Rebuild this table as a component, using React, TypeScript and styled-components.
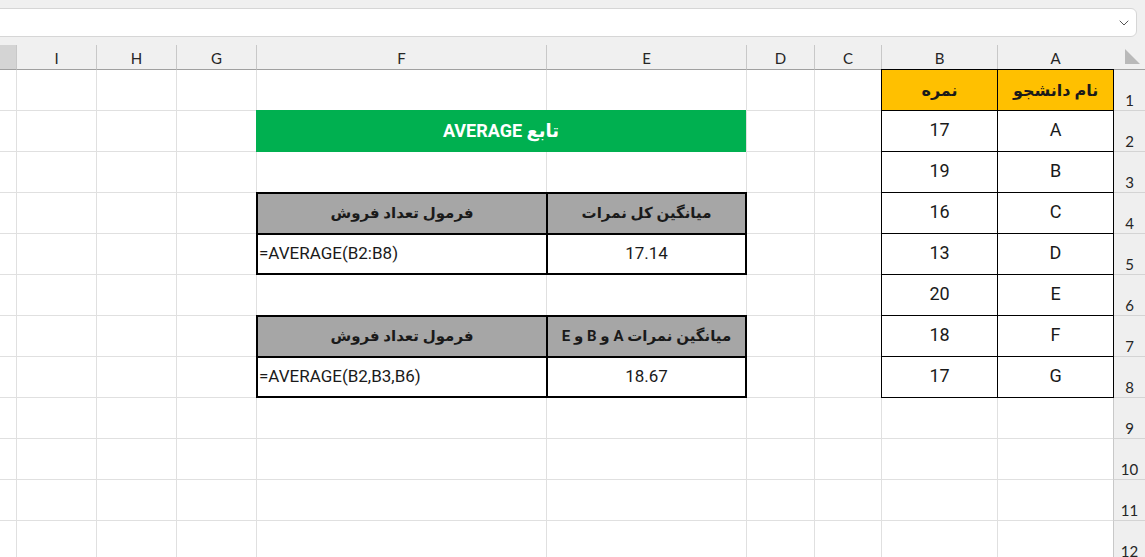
import styled, { createGlobalStyle } from "styled-components";
import { ChevronDown } from "lucide-react";

const GlobalStyle = createGlobalStyle`
  html, body {
    margin: 0;
    padding: 0;
    background: #ffffff;
    overflow: hidden;
  }
  * {
    box-sizing: border-box;
  }
`;

const COLUMNS = ["A", "B", "C", "D", "E", "F", "G", "H", "I"];
const ROW_COUNT = 12;

const students = [
  { name: "A", score: 17 },
  { name: "B", score: 19 },
  { name: "C", score: 16 },
  { name: "D", score: 13 },
  { name: "E", score: 20 },
  { name: "F", score: 18 },
  { name: "G", score: 17 },
];

const summaries = [
  { title: "میانگین کل نمرات", value: "17.14", formula: "=AVERAGE(B2:B8)", row: 5 },
  { title: "میانگین نمرات A و B و E", value: "18.67", formula: "=AVERAGE(B2,B3,B6)", row: 8 },
];

export default function App() {
  const emptyCells = [];
  for (let r = 2; r <= ROW_COUNT + 1; r++) {
    for (let c = 2; c <= 11; c++) {
      emptyCells.push(<Cell key={`${r}-${c}`} $row={r} $col={c} $edge={c === 11} />);
    }
  }

  return (
    <>
      <GlobalStyle />
      <Window>
        <FormulaBar>
          <FormulaInput>
            <ChevronDown size={16} strokeWidth={1.5} color="#555" />
          </FormulaInput>
        </FormulaBar>
        <Sheet>
          <Corner>
            <svg width="16" height="16" viewBox="0 0 16 16">
              <polygon points="0,0 0,15 15,15" fill="#b9b9b9" />
            </svg>
          </Corner>
          {COLUMNS.map((letter, i) => (
            <ColHeader key={letter} $col={i + 2}>
              {letter}
            </ColHeader>
          ))}
          <ColStub />
          {Array.from({ length: ROW_COUNT }, (_, i) => (
            <RowHeader key={i} $row={i + 2}>
              {i + 1}
            </RowHeader>
          ))}
          {emptyCells}

          <StudentTable>
            <StudentCell $head>نام دانشجو</StudentCell>
            <StudentCell $head>نمره</StudentCell>
            {students.flatMap((s) => [
              <StudentCell key={`n${s.name}`}>{s.name}</StudentCell>,
              <StudentCell key={`s${s.name}`}>{s.score}</StudentCell>,
            ])}
          </StudentTable>

          <Banner>تابع AVERAGE</Banner>

          {summaries.map((t) => (
            <SummaryTable key={t.row} $row={t.row}>
              <SummaryCell $head>{t.title}</SummaryCell>
              <SummaryCell $head>فرمول تعداد فروش</SummaryCell>
              <SummaryCell>{t.value}</SummaryCell>
              <FormulaText>{t.formula}</FormulaText>
            </SummaryTable>
          ))}
        </Sheet>
      </Window>
    </>
  );
}

const Window = styled.div`
  width: 1145px;
  height: 557px;
  overflow: hidden;
  background: #f0f0f0;
`;

const FormulaBar = styled.div`
  height: 45px;
  padding: 8px 8px 8px 0;
  background: #f0f0f0;
`;

const FormulaInput = styled.div`
  height: 29px;
  margin-left: -10px;
  background: #ffffff;
  border: 1px solid #d6d6d6;
  border-radius: 6px;
  display: flex;
  align-items: center;
  justify-content: flex-end;
  padding-right: 4px;
`;

const Sheet = styled.div`
  direction: rtl;
  display: grid;
  grid-template-columns: 32px 116px 116px 67px 68px 200px 290px 80px 80px 80px 16px;
  grid-template-rows: 25px repeat(${ROW_COUNT}, 41px);
  background: #ffffff;
  font-family: Lato, "Liberation Sans", sans-serif;
`;

const Corner = styled.div`
  grid-column: 1;
  grid-row: 1;
  background: #f0f0f0;
  border-bottom: 1px solid #a0a0a0;
  display: flex;
  align-items: flex-end;
  justify-content: flex-start;
  padding: 0 4px 4px 0;
`;

const ColHeader = styled.div<{ $col: number }>`
  grid-column: ${({ $col }) => $col};
  grid-row: 1;
  background: #f0f0f0;
  border-left: 1px solid #c8c8c8;
  border-bottom: 1px solid #a0a0a0;
  display: flex;
  align-items: center;
  justify-content: center;
  font-size: 15px;
  color: #262626;
  padding-top: 2px;
`;

const ColStub = styled.div`
  grid-column: 11;
  grid-row: 1;
  background: #d4d4d4;
  border-bottom: 1px solid #a0a0a0;
`;

const RowHeader = styled.div<{ $row: number }>`
  grid-column: 1;
  grid-row: ${({ $row }) => $row};
  background: #efefef;
  border-left: 1px solid #c8c8c8;
  border-bottom: 1px solid #d4d4d4;
  display: flex;
  align-items: flex-end;
  justify-content: center;
  padding-bottom: 1px;
  font-size: 15px;
  color: #262626;
`;

const Cell = styled.div<{ $row: number; $col: number; $edge?: boolean }>`
  grid-column: ${({ $col }) => $col};
  grid-row: ${({ $row }) => $row};
  border-bottom: 1px solid #e0e0e0;
  border-left: ${({ $edge }) => ($edge ? "none" : "1px solid #e0e0e0")};
`;

const StudentTable = styled.div`
  grid-column: 2 / 4;
  grid-row: 2 / 10;
  margin: -1px -1px 0 0;
  border-top: 1px solid #000;
  border-right: 1px solid #000;
  display: grid;
  grid-template-columns: 1fr 1fr;
  grid-template-rows: repeat(8, 1fr);
  z-index: 1;
`;

const StudentCell = styled.div<{ $head?: boolean }>`
  border-left: 1px solid #000;
  border-bottom: 1px solid #000;
  background: ${({ $head }) => ($head ? "#ffc000" : "#ffffff")};
  display: flex;
  align-items: center;
  justify-content: center;
  font-family: Roboto, "DejaVu Sans", sans-serif;
  font-size: ${({ $head }) => ($head ? "16px" : "18px")};
  font-weight: ${({ $head }) => ($head ? 700 : 400)};
  color: #1a1a1a;
  padding-bottom: ${({ $head }) => ($head ? "0" : "3px")};
`;

const Banner = styled.div`
  grid-column: 6 / 8;
  grid-row: 3;
  margin-top: -1px;
  background: #00b050;
  color: #ffffff;
  display: flex;
  align-items: center;
  justify-content: center;
  padding-bottom: 2px;
  font-family: Roboto, "DejaVu Sans", sans-serif;
  font-size: 18px;
  font-weight: 700;
  z-index: 1;
`;

const SummaryTable = styled.div<{ $row: number }>`
  grid-column: 6 / 8;
  grid-row: ${({ $row }) => `${$row} / ${$row + 2}`};
  margin: -1px -1px 0 0;
  border-top: 2px solid #000;
  border-right: 2px solid #000;
  display: grid;
  grid-template-columns: 199px 1fr;
  grid-template-rows: 1fr 1fr;
  z-index: 1;
`;

const SummaryCell = styled.div<{ $head?: boolean }>`
  border-bottom: 2px solid #000;
  border-left: 2px solid #000;
  background: ${({ $head }) => ($head ? "#a6a6a6" : "#ffffff")};
  display: flex;
  align-items: center;
  justify-content: center;
  padding-bottom: 1px;
  font-family: Roboto, "DejaVu Sans", sans-serif;
  font-size: ${({ $head }) => ($head ? "15px" : "17px")};
  font-weight: ${({ $head }) => ($head ? 700 : 400)};
  color: #1a1a1a;
`;

const FormulaText = styled.div`
  direction: ltr;
  border-bottom: 2px solid #000;
  border-left: 2px solid #000;
  background: #ffffff;
  display: flex;
  align-items: center;
  padding: 0 0 1px 1px;
  font-family: Roboto, "DejaVu Sans", sans-serif;
  font-size: 17px;
  color: #1a1a1a;
`;
